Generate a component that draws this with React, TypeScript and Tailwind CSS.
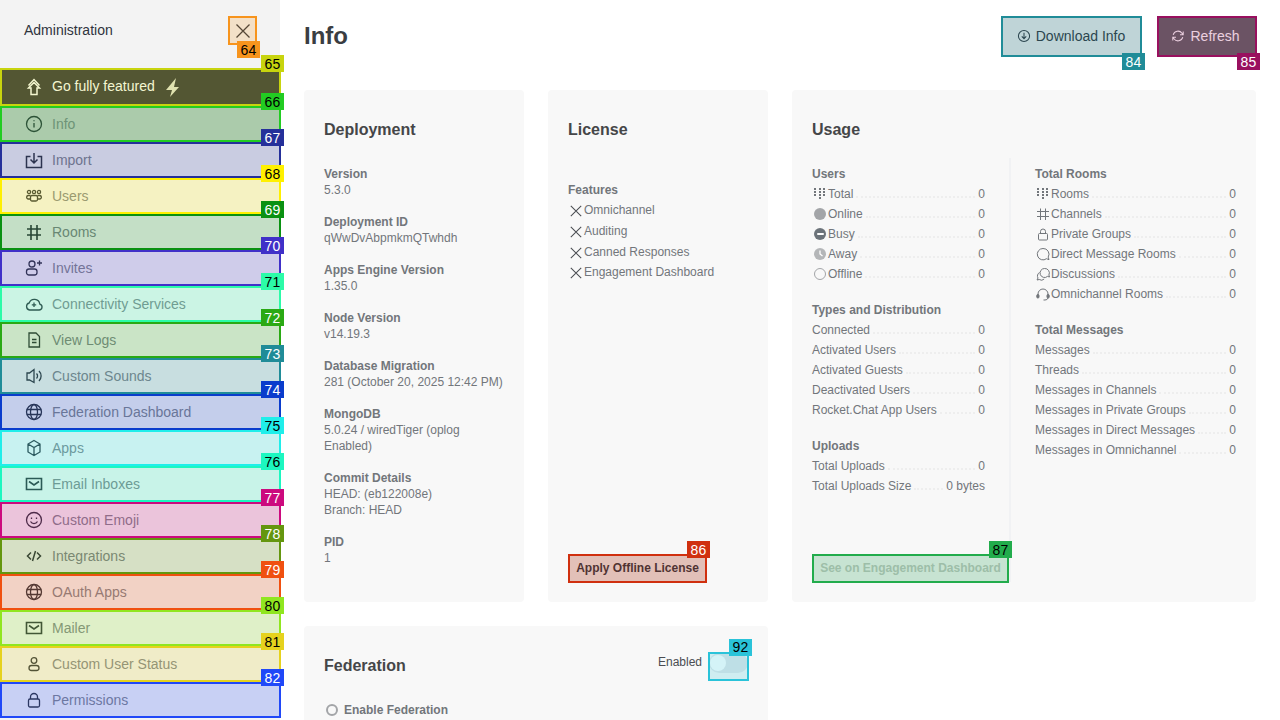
import type { ReactNode } from 'react';

type Mark = { box: string; badge: string; n: number };

const marks: Record<string, Mark> = {
  close: { box: 'border-[#f7941d] bg-[#f7941d]/20', badge: 'bg-[#f7941d] text-black', n: 64 },
  download: { box: 'border-[#208c98] bg-[#208c98]/20', badge: 'bg-[#208c98] text-white', n: 84 },
  refresh: { box: 'border-[#99105f] bg-[#99105f]/20', badge: 'bg-[#99105f] text-white', n: 85 },
  offline: { box: 'border-[#d0300f] bg-[#d0300f]/20', badge: 'bg-[#d0300f] text-white', n: 86 },
  engagement: { box: 'border-[#22ac4c] bg-[#22ac4c]/20', badge: 'bg-[#22ac4c] text-black', n: 87 },
  toggle: { box: 'border-[#2ac3d9] bg-[#2ac3d9]/20', badge: 'bg-[#2ac3d9] text-black', n: 92 },
};

const navItems: { label: string; icon: string; mark: Mark; active?: boolean }[] = [
  { label: 'Info', icon: 'info', active: true, mark: { box: 'border-[#22cc22] bg-[#22cc22]/20', badge: 'bg-[#22cc22] text-black', n: 66 } },
  { label: 'Import', icon: 'import', mark: { box: 'border-[#25309a] bg-[#25309a]/20', badge: 'bg-[#25309a] text-white', n: 67 } },
  { label: 'Users', icon: 'users', mark: { box: 'border-[#fff000] bg-[#fff000]/20', badge: 'bg-[#fff000] text-black', n: 68 } },
  { label: 'Rooms', icon: 'hash', mark: { box: 'border-[#0a9112] bg-[#0a9112]/20', badge: 'bg-[#0a9112] text-white', n: 69 } },
  { label: 'Invites', icon: 'invite', mark: { box: 'border-[#4030c8] bg-[#4030c8]/20', badge: 'bg-[#4030c8] text-white', n: 70 } },
  { label: 'Connectivity Services', icon: 'cloud', mark: { box: 'border-[#2cfba8] bg-[#2cfba8]/20', badge: 'bg-[#2cfba8] text-black', n: 71 } },
  { label: 'View Logs', icon: 'doc', mark: { box: 'border-[#2aa914] bg-[#2aa914]/20', badge: 'bg-[#2aa914] text-white', n: 72 } },
  { label: 'Custom Sounds', icon: 'sound', mark: { box: 'border-[#208c98] bg-[#208c98]/20', badge: 'bg-[#208c98] text-white', n: 73 } },
  { label: 'Federation Dashboard', icon: 'globe', mark: { box: 'border-[#0a3ccc] bg-[#0a3ccc]/20', badge: 'bg-[#0a3ccc] text-white', n: 74 } },
  { label: 'Apps', icon: 'cube', mark: { box: 'border-[#20eeea] bg-[#20eeea]/20', badge: 'bg-[#20eeea] text-black', n: 75 } },
  { label: 'Email Inboxes', icon: 'mail', mark: { box: 'border-[#1cf7c0] bg-[#1cf7c0]/20', badge: 'bg-[#1cf7c0] text-black', n: 76 } },
  { label: 'Custom Emoji', icon: 'emoji', mark: { box: 'border-[#cc0a7e] bg-[#cc0a7e]/20', badge: 'bg-[#cc0a7e] text-white', n: 77 } },
  { label: 'Integrations', icon: 'code', mark: { box: 'border-[#64960f] bg-[#64960f]/20', badge: 'bg-[#64960f] text-white', n: 78 } },
  { label: 'OAuth Apps', icon: 'globe', mark: { box: 'border-[#f05010] bg-[#f05010]/20', badge: 'bg-[#f05010] text-white', n: 79 } },
  { label: 'Mailer', icon: 'mail', mark: { box: 'border-[#90e620] bg-[#90e620]/20', badge: 'bg-[#90e620] text-black', n: 80 } },
  { label: 'Custom User Status', icon: 'user', mark: { box: 'border-[#e6d21e] bg-[#e6d21e]/20', badge: 'bg-[#e6d21e] text-black', n: 81 } },
  { label: 'Permissions', icon: 'lock', mark: { box: 'border-[#2048f8] bg-[#2048f8]/20', badge: 'bg-[#2048f8] text-white', n: 82 } },
];

const deployment: [string, string[]][] = [
  ['Version', ['5.3.0']],
  ['Deployment ID', ['qWwDvAbpmkmQTwhdh']],
  ['Apps Engine Version', ['1.35.0']],
  ['Node Version', ['v14.19.3']],
  ['Database Migration', ['281 (October 20, 2025 12:42 PM)']],
  ['MongoDB', ['5.0.24 / wiredTiger (oplog', 'Enabled)']],
  ['Commit Details', ['HEAD: (eb122008e)', 'Branch: HEAD']],
  ['PID', ['1']],
];

type Row = { label: string; value?: string; icon?: string };

const usageLeft: { title: string; rows: Row[] }[] = [
  {
    title: 'Users',
    rows: [
      { label: 'Total', icon: 'grid' },
      { label: 'Online', icon: 'online' },
      { label: 'Busy', icon: 'busy' },
      { label: 'Away', icon: 'away' },
      { label: 'Offline', icon: 'ring' },
    ],
  },
  {
    title: 'Types and Distribution',
    rows: [
      { label: 'Connected' },
      { label: 'Activated Users' },
      { label: 'Activated Guests' },
      { label: 'Deactivated Users' },
      { label: 'Rocket.Chat App Users' },
    ],
  },
  {
    title: 'Uploads',
    rows: [{ label: 'Total Uploads' }, { label: 'Total Uploads Size', value: '0 bytes' }],
  },
];

const usageRight: { title: string; rows: Row[] }[] = [
  {
    title: 'Total Rooms',
    rows: [
      { label: 'Rooms', icon: 'grid' },
      { label: 'Channels', icon: 'hash' },
      { label: 'Private Groups', icon: 'lock' },
      { label: 'Direct Message Rooms', icon: 'balloon' },
      { label: 'Discussions', icon: 'discussion' },
      { label: 'Omnichannel Rooms', icon: 'headset' },
    ],
  },
  {
    title: 'Total Messages',
    rows: [
      { label: 'Messages' },
      { label: 'Threads' },
      { label: 'Messages in Channels' },
      { label: 'Messages in Private Groups' },
      { label: 'Messages in Direct Messages' },
      { label: 'Messages in Omnichannel' },
    ],
  },
];

function Icon({ name, size = 20 }: { name: string; size?: number }) {
  const parts: Record<string, ReactNode> = {
    close: <path d="M3.5 3.5l13 13M16.500 3.500l-13 13" />,
    info: (
      <>
        <circle cx="10" cy="10" r="7.5" />
        <path d="M10 9v4.5M10 6.2v1" />
      </>
    ),
    import: <path strokeWidth="1.5" d="M6.5 6.5h-4v11h15v-11h-4M10 3v10M6.5 9.5L10 13l3.5-3.5" />,
    users: (
      <>
        <circle cx="5" cy="6" r="1.6" />
        <circle cx="10" cy="6" r="1.6" />
        <circle cx="15" cy="6" r="1.6" />
        <rect x="6.5" y="9.5" width="7" height="5.5" rx="1.5" />
        <path d="M6.5 13H4a1.8 1.8 0 0 1 0-3.5h2.5M13.5 13H16a1.8 1.8 0 0 0 0-3.5h-2.5" />
      </>
    ),
    hash: <path strokeWidth="1.6" d="M7 3v15M13 3v15M3 7h14M3 13h14" />,
    invite: (
      <>
        <circle cx="8" cy="6" r="3" />
        <rect x="2.5" y="11" width="10.5" height="6" rx="2.5" />
        <path d="M15.5 2.5v5M13 5h5" />
      </>
    ),
    cloud: <path d="M5.5 16h9.500a3 3 0 0 0 .8-5.900A5.500 5.500 0 0 0 5.200 9 3.600 3.600 0 0 0 5.500 16zM10 8.500v4.500M7.800 10.800h4.400" />,
    doc: <path d="M5 3h7l3.500 3.500V17H5zM8 9.500h4.500M8 12.500h4.500" />,
    sound: <path d="M3 7h2.500L10 3.500v13L5.500 14H3zM12.500 7.500a3.500 3.500 0 0 1 0 5M15 5a7 7 0 0 1 0 10" />,
    globe: (
      <>
        <circle cx="10" cy="10" r="7.500" />
        <ellipse cx="10" cy="10" rx="3.500" ry="7.500" />
        <path d="M2.800 7.500h14.400M2.800 12.500h14.400" />
      </>
    ),
    cube: <path d="M10 2.500L16 6v8l-6 3.500L4 14V6zM4 6l6 3.500L16 6M10 9.500v8" />,
    mail: <path strokeWidth="1.600" d="M2.500 4.500h15v11h-15zM5 7.500l5 3.500 5-3.500" />,
    emoji: (
      <>
        <circle cx="10" cy="10" r="7.500" />
        <path d="M7.500 7.500v1.500M12.500 7.500v1.500M6.500 11.500a4 4 0 0 0 7 0" />
      </>
    ),
    code: <path strokeWidth="1.500" d="M7 6.500L3.500 10 7 13.500M13 6.500l3.500 3.500-3.500 3.500M11.500 5l-3 10" />,
    user: (
      <>
        <circle cx="10" cy="6.500" r="2.800" />
        <rect x="5" y="11.500" width="10" height="5" rx="2.500" />
      </>
    ),
    lock: (
      <>
        <path d="M6.500 9V7a3.500 3.500 0 0 1 7 0v2" />
        <rect x="4.500" y="9" width="11" height="8" rx="1.500" />
      </>
    ),
    arrow: <path strokeWidth="1.500" d="M10 5.500L15.500 11H13v6.500H7V11H4.500zM4.500 8.500L10 2.500l5.500 6" />,
    downloadCircle: (
      <>
        <circle cx="10" cy="10" r="7" />
        <path d="M10 6v7M7.200 10.500L10 13.300l2.800-2.800" />
      </>
    ),
    refresh: <path d="M4 8.500A6.200 6.200 0 0 1 15 6.500l1.500 2M16.500 4.500v4h-4M16 11.500A6.200 6.200 0 0 1 5 13.500l-1.500-2M3.500 15.500v-4h4" />,
  };
  return (
    <svg width={size} height={size} viewBox="0 0 20 20" fill="none" stroke="currentColor" strokeWidth="1.3" className="shrink-0">
      {parts[name]}
    </svg>
  );
}

function SmallIcon({ name }: { name: string }) {
  if (name === 'online') return <span className="mx-[2px] h-[12px] w-[12px] shrink-0 rounded-full bg-[#a3a5a8]" />;
  if (name === 'ring') return <span className="mx-[2px] h-[12px] w-[12px] shrink-0 rounded-full border-[1.5px] border-[#a3a5a8]" />;
  if (name === 'busy') {
    return (
      <span className="mx-[2px] flex h-[12px] w-[12px] shrink-0 items-center justify-center rounded-full bg-[#6c737a]">
        <span className="h-[2px] w-[7px] rounded-full bg-white" />
      </span>
    );
  }
  const shapes: Record<string, ReactNode> = {
    away: (
      <>
        <circle cx="8" cy="8" r="6" fill="#b4b6b8" />
        <path d="M8 4.500V8l2.500 2" stroke="#fff" strokeWidth="1.300" fill="none" />
      </>
    ),
    grid: (
      <g stroke="currentColor" strokeWidth="2" strokeDasharray="2 1" fill="none">
        <path d="M3 2v9M8 2v12M12 2v9" />
      </g>
    ),
    hash: <path d="M5.500 2.500v11.500M10.500 2.500v11.500M2 5.500h12M2 10.500h12" stroke="currentColor" fill="none" />,
    lock: (
      <g stroke="currentColor" fill="none">
        <path d="M5.500 7.500V5.500a2.500 2.500 0 0 1 5 0v2" />
        <rect x="3.500" y="7.500" width="9" height="6.500" rx="1" />
      </g>
    ),
    balloon: <path d="M8 2.500a5.700 5.700 0 1 0 3.500 10.200l2.500 1-.8-2.600A5.700 5.700 0 0 0 8 2.500z" stroke="currentColor" fill="none" />,
    discussion: (
      <g stroke="currentColor" fill="none">
        <path d="M9.500 2.500a4.500 4.500 0 1 0 3 7.900l2 .6-.6-2A4.500 4.500 0 0 0 9.500 2.500z" />
        <path d="M4.500 6.500a4 4 0 0 0-1.500 5.500l-1 2 2.200-.5a4 4 0 0 0 5-.5" />
      </g>
    ),
    headset: (
      <g fill="none" stroke="currentColor">
        <path d="M3 9.500V8a5 5 0 0 1 10 0v1.500" />
        <rect x="1.800" y="8.500" width="2.200" height="3.500" rx="1" fill="currentColor" />
        <rect x="12" y="8.500" width="2.200" height="3.500" rx="1" fill="currentColor" />
        <path d="M13 12a3 3 0 0 1-3 2H8.500" />
      </g>
    ),
  };
  return (
    <svg width="16" height="16" viewBox="0 0 16 16" className="shrink-0">
      {shapes[name]}
    </svg>
  );
}

// Marked: the tinted, outlined box with its number tag on top of a control.
function Marked({ mark, tag = '-top-[13px]', className = '', children }: { mark: Mark; tag?: string; className?: string; children: ReactNode }) {
  return (
    <div className={`relative ${className}`}>
      {children}
      <div className={`pointer-events-none absolute inset-0 border-2 ${mark.box}`} />
      <span className={`absolute -right-[3px] z-10 flex h-[17px] w-[23px] items-center justify-center text-sm tracking-[0.3px] ${tag} ${mark.badge}`}>
        {mark.n}
      </span>
    </div>
  );
}

function Sidebar() {
  return (
    <aside className="w-[280px] shrink-0 bg-[#f3f3f3]">
      <header className="flex h-[68px] items-start justify-between pl-6 pr-[23px] pt-4">
        <h2 className="mt-1 text-sm leading-5 text-[#2f343d]">Administration</h2>
        <Marked mark={marks.close} tag="top-[25px]" className="h-[29px] w-[29px]">
          <div className="flex h-full items-center justify-center text-[#2f343d]">
            <Icon name="close" />
          </div>
        </Marked>
      </header>

      <Marked mark={{ box: 'border-[#c8d40e] bg-[#c8d40e]/20', badge: 'bg-[#c8d40e] text-black', n: 65 }} className="w-[281px]">
        <div className="flex h-[38px] items-center gap-2 bg-[#36373c] px-6 text-sm text-white">
          <Icon name="arrow" />
          <span className="pb-[2px]">Go fully featured</span>
          <svg width="16" height="20" viewBox="0 0 16 20" className="ml-[1px] shrink-0 fill-[#e6e6d8]">
            <path d="M12 1L2 13h6L6 20l9-10h-5z" />
          </svg>
        </div>
      </Marked>

      <nav>
        {navItems.map((item) => (
          <Marked key={item.mark.n} mark={item.mark} className="w-[281px]">
            <div className={`flex h-9 items-center gap-2 px-6 text-sm ${item.active ? 'bg-[#cdcbcd]' : ''}`}>
              <span className="text-[#2f343d]">
                <Icon name={item.icon} />
              </span>
              <span className="text-[#81858c]">{item.label}</span>
            </div>
          </Marked>
        ))}
      </nav>
    </aside>
  );
}

function Card({ title, className = '', children }: { title: string; className?: string; children: ReactNode }) {
  return (
    <section className={`flex h-[512px] flex-col rounded bg-[#f8f8f8] p-5 ${className}`}>
      <h3 className="flex h-10 shrink-0 items-center text-base font-bold text-[#454648]">{title}</h3>
      {children}
    </section>
  );
}

function UsageRow({ label, value = '0', icon }: Row) {
  return (
    <div className="flex h-5 items-center text-xs text-[#72767b]">
      {icon && <SmallIcon name={icon} />}
      <span className="whitespace-nowrap">{label}</span>
      <span className="mx-[3px] mt-[6px] h-[2px] min-w-0 flex-1 border-b-2 border-dotted border-[#eeeeee]" />
      <span className="whitespace-nowrap">{value}</span>
    </div>
  );
}

function UsageColumn({ sections }: { sections: { title: string; rows: Row[] }[] }) {
  return (
    <div className="flex flex-col gap-[18px] pt-2">
      {sections.map((s) => (
        <div key={s.title}>
          <h4 className="mb-[2px] text-xs font-bold text-[#72767b]">{s.title}</h4>
          {s.rows.map((r) => (
            <UsageRow key={r.label} {...r} />
          ))}
        </div>
      ))}
    </div>
  );
}

export default function App() {
  return (
    <div className="flex h-[720px] w-[1280px] overflow-hidden bg-white font-['Liberation_Sans',Arial,sans-serif]">
      <Sidebar />
      <main className="min-w-0 flex-1 px-6">
        <div className="-mr-px flex h-[90px] items-start justify-between pt-4">
          <h1 className="text-2xl leading-10 font-bold text-[#3a3d42]">Info</h1>
          <div className="flex gap-[15px]">
            <Marked mark={marks.download} tag="top-[37px]" className="h-[41px] w-[141px]">
              <div className="flex h-full items-center justify-center gap-1 bg-[#e8e7e8] pb-px pr-[2px] text-sm text-[#2f343d]">
                <Icon name="downloadCircle" size={16} />
                Download Info
              </div>
            </Marked>
            <Marked mark={marks.refresh} tag="top-[37px]" className="h-[41px] w-[100px]">
              <div className="flex h-full items-center justify-center gap-1 bg-[#606466] pb-px pr-1 text-sm text-white">
                <Icon name="refresh" size={16} />
                Refresh
              </div>
            </Marked>
          </div>
        </div>

        <div className="grid grid-cols-4 gap-6">
          <Card title="Deployment">
            <div className="flex flex-col gap-4 pt-4 text-xs text-[#72767b]">
              {deployment.map(([label, lines]) => (
                <div key={label}>
                  <div className="font-bold">{label}</div>
                  {lines.map((l) => (
                    <div key={l}>{l}</div>
                  ))}
                </div>
              ))}
            </div>
          </Card>

          <Card title="License">
            <div className="pt-8 text-xs text-[#72767b]">
              <div className="mb-[2px] font-bold">Features</div>
              {['Omnichannel', 'Auditing', 'Canned Responses', 'Engagement Dashboard'].map((f) => (
                <div key={f} className="flex h-[20.67px] items-center">
                  <span className="mt-[2px] text-[#4a4d52]">
                    <Icon name="close" size={16} />
                  </span>
                  {f}
                </div>
              ))}
            </div>
            <Marked mark={marks.offline} className="-mb-px mt-auto h-[29px] w-[139px]">
              <div className="flex h-full items-center justify-center bg-[#e7e4e3] pb-px text-xs font-bold text-[#2f343d]">
                Apply Offline License
              </div>
            </Marked>
          </Card>

          <Card title="Usage" className="col-span-2">
            <div className="mt-2 flex min-h-0 flex-1">
              <div className="flex w-[199px] shrink-0 flex-col border-r-2 border-[#f1f2f4] pr-6">
                <UsageColumn sections={usageLeft} />
                <Marked mark={marks.engagement} className="-mb-px mt-auto h-[29px] w-[197px] shrink-0">
                  <div className="flex h-full items-center justify-center whitespace-nowrap bg-[#f1f2f4] pb-px text-xs font-bold text-[#bcc3c0]">
                    See on Engagement Dashboard
                  </div>
                </Marked>
              </div>
              <div className="min-w-0 flex-1 pl-6">
                <UsageColumn sections={usageRight} />
              </div>
            </div>
          </Card>

          <Card title="Federation" className="col-span-2">
            <div className="-mt-10 flex h-10 items-center justify-end gap-[6px]">
              <span className="-mt-2 text-xs text-[#4a4d52]">Enabled</span>
              <Marked mark={marks.toggle} className="-mr-px h-[29px] w-[41px]">
                <div className="relative mx-px mt-px h-5 rounded-full bg-[#e4e7ea]">
                  <span className="absolute left-px top-[2px] h-4 w-4 rounded-full bg-white" />
                </div>
              </Marked>
            </div>
            <div className="mt-4 flex items-center gap-[6px] pl-[2px] text-xs font-bold text-[#72767b]">
              <span className="h-3 w-3 rounded-full border-2 border-[#a3a5a8]" />
              Enable Federation
            </div>
          </Card>
        </div>
      </main>
    </div>
  );
}
